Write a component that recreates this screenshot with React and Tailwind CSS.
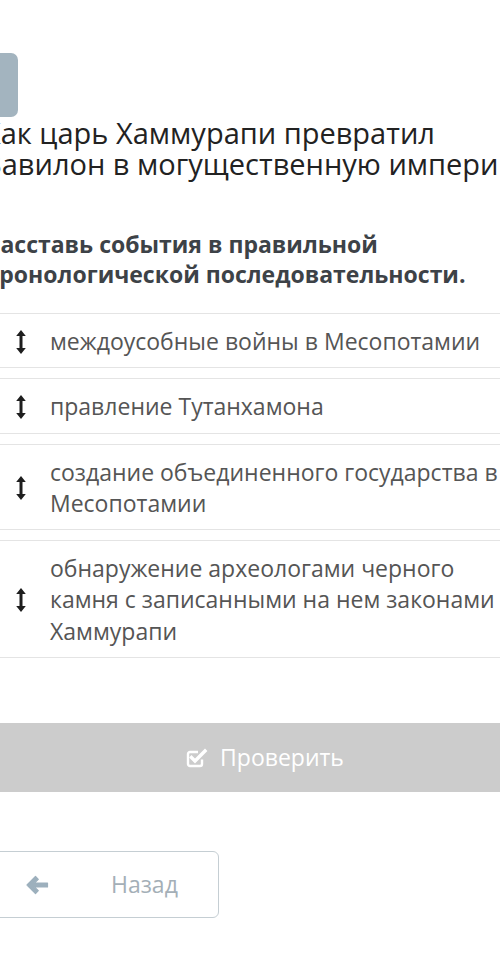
import React from "react";

function UpDown() {
  return (
    <svg width="10" height="24" viewBox="0 0 10 24" className="shrink-0">
      <path d="M5 0 L9.8 6 H6.5 V18 H9.8 L5 24 L0.2 18 H3.5 V6 H0.2 Z" fill="#1e1e1e" />
    </svg>
  );
}

function CheckSquare() {
  return (
    <svg width="22" height="22" viewBox="0 0 22 22" fill="none">
      <path d="M16 12.5 V17 a2 2 0 0 1 -2 2 H4 a2 2 0 0 1 -2 -2 V7 a2 2 0 0 1 2 -2 H12" stroke="#fff" strokeWidth="2.4" strokeLinejoin="round" />
      <path d="M5.5 10.5 L9 14 L19 4" stroke="#fff" strokeWidth="3.4" strokeLinecap="square" />
    </svg>
  );
}

function ArrowLeft() {
  return (
    <svg width="24" height="20" viewBox="0 0 24 20">
      <path d="M10.5 1.5 L2 10 L10.5 18.5 L13.3 15.7 L9.4 11.9 H22.5 V8.1 H9.4 L13.3 4.3 Z" fill="#9db0bd" stroke="#9db0bd" strokeWidth="1.2" strokeLinejoin="round" />
    </svg>
  );
}

const items = [
  ["междоусобные войны в Месопотамии"],
  ["правление Тутанхамона"],
  ["создание объединенного государства в", "Месопотамии"],
  ["обнаружение археологами черного", "камня с записанными на нем законами", "Хаммурапи"],
];

export default function App() {
  return (
    <div className="w-[500px] h-[960px] overflow-hidden bg-white" style={{ fontFamily: '"Open Sans", "Noto Sans", sans-serif' }}>
      <div className="w-[560px] pt-[53px]">
        <div className="ml-[-46px] w-[64px] h-[64px] rounded-[7px] bg-[#a3b4bf]" />
        <h1 className="ml-[-17px] text-[29px] leading-[31px] font-normal text-[#222] whitespace-nowrap">
          Как царь Хаммурапи превратил
          <br />
          Вавилон в могущественную империю
        </h1>
        <p className="mt-[50px] ml-[-14px] text-[23px] leading-[30px] font-bold text-[#3d4247] whitespace-nowrap">
          Расставь события в правильной
          <br />
          хронологической последовательности.
        </p>
        <div className="mt-[24px] flex flex-col gap-[10px]">
          {items.map((lines, i) => (
            <div key={i} className="flex items-center bg-white border-y border-[#e4e4e4] pt-[12px] pb-[10px] pl-[16px] w-[560px]">
              <UpDown />
              <span className="ml-[24px] text-[23px] leading-[31.3px] text-[#555] whitespace-nowrap">
                {lines.map((l, j) => (
                  <React.Fragment key={j}>
                    {j > 0 && <br />}
                    {l}
                  </React.Fragment>
                ))}
              </span>
            </div>
          ))}
        </div>
        <div className="mt-[65px] ml-[-30px] h-[69px] w-[590px] bg-[#cccccc] flex items-center justify-center gap-[12px] text-white text-[23px]">
          <CheckSquare />
          <span>Проверить</span>
        </div>
        <div className="mt-[59px] ml-[-34px] h-[67px] w-[253px] rounded-[6px] border-[1.5px] border-[#c5ced3] flex items-center">
          <div className="ml-[58px]"><ArrowLeft /></div>
          <span className="ml-[62px] text-[23px] text-[#a4afb7]">Назад</span>
        </div>
      </div>
    </div>
  );
}
